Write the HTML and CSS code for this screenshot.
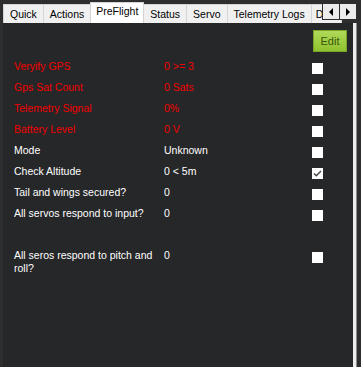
FILE: index.html
```html
<!DOCTYPE html>
<html lang="en">
<head>
  <meta charset="UTF-8">
  <title>PreFlight</title>
  <link rel="stylesheet" href="styles.css">
</head>
<body>
  <!-- Tab strip -->
  <div class="tabs">
    <div class="tab">Quick</div>
    <div class="tab">Actions</div>
    <div class="tab active">PreFlight</div>
    <div class="tab tab-status">Status</div>
    <div class="tab">Servo</div>
    <div class="tab">Telemetry Logs</div>
    <div class="tab tab-last">D</div>
  </div>

  <!-- Scroll arrows sit over the clipped tabs -->
  <div class="tab-arrows">
    <div class="arrow"><span class="tri tri-left"></span></div>
    <div class="arrow"><span class="tri tri-right"></span></div>
  </div>

  <div class="panel">
    <div class="toolbar">
      <button class="edit-btn">Edit</button>
    </div>

    <div class="checklist">
      <div class="row warn">
        <div class="label">Veryify GPS</div>
        <div class="value">0 &gt;= 3</div>
        <div class="check"></div>
      </div>
      <div class="row warn">
        <div class="label">Gps Sat Count</div>
        <div class="value">0 Sats</div>
        <div class="check"></div>
      </div>
      <div class="row warn">
        <div class="label">Telemetry Signal</div>
        <div class="value">0%</div>
        <div class="check"></div>
      </div>
      <div class="row warn">
        <div class="label">Battery Level</div>
        <div class="value">0 V</div>
        <div class="check"></div>
      </div>
      <div class="row">
        <div class="label">Mode</div>
        <div class="value">Unknown</div>
        <div class="check"></div>
      </div>
      <div class="row">
        <div class="label">Check Altitude</div>
        <div class="value">0 &lt; 5m</div>
        <div class="check checked">
          <svg width="11" height="11" viewBox="0 0 11 11"><path d="M2 5.5 L4.3 7.8 L9 3" fill="none" stroke="#444" stroke-width="1.4"/></svg>
        </div>
      </div>
      <div class="row">
        <div class="label">Tail and wings secured?</div>
        <div class="value">0</div>
        <div class="check"></div>
      </div>
      <div class="row">
        <div class="label">All servos respond to input?</div>
        <div class="value">0</div>
        <div class="check"></div>
      </div>
      <div class="row spacer"></div>
      <div class="row">
        <div class="label">All seros respond to pitch and roll?</div>
        <div class="value">0</div>
        <div class="check"></div>
      </div>
    </div>
  </div>
</body>
</html>
```

FILE: styles.css
```css
/* Page */
body {
  margin: 0;
  width: 361px;
  height: 367px;
  overflow: hidden;
  position: relative;
  background-color: #2e2e2e;
  font-family: "Liberation Sans", Arial, sans-serif;
  font-size: 10.5px;
  color: white;
}

/* Tab strip */
.tabs {
  display: flex;
  align-items: flex-end;
  height: 23px;
  padding-left: 3px;
  white-space: nowrap;
  overflow: hidden;
}

.tab {
  box-sizing: border-box;
  flex-shrink: 0;
  height: 19px;
  padding: 0 6px;
  line-height: 19px;
  background-color: #f0f0f0;
  border: 1px solid #d4d4d4;
  border-bottom: none;
  border-left: none;
  color: black;
}

.tab:first-child {
  border-left: 1px solid #d4d4d4;
}

.tab-status {
  padding: 0 6px;
}

.tab-last {
  width: 30px;
  padding: 0 4px;
}

.tab.active {
  height: 21px;
  line-height: 17px;
  padding: 0 5px;
  background-color: white;
  border-left: 1px solid #d4d4d4;
  margin-left: -1px;
}

/* Tab scroll arrows */
.tab-arrows {
  position: absolute;
  top: 3px;
  right: 4px;
  display: flex;
  background-color: #2e2e2e;
  padding: 1px 0 1px 1px;
}

.arrow {
  width: 16px;
  height: 15px;
  margin-right: 1px;
  background-color: #ececec;
  display: flex;
  justify-content: center;
  align-items: center;
}

.tri {
  width: 0;
  height: 0;
  border-top: 4px solid transparent;
  border-bottom: 4px solid transparent;
}

.tri-left {
  border-right: 4px solid black;
}

.tri-right {
  border-left: 4px solid black;
}

/* Main panel */
.panel {
  margin-left: 3px;
  width: 350px;
  height: 344px;
  background-color: #262729;
  border-right: 3px solid #ececec;
  box-shadow: 1px 0 0 #8c8c8c;
}

.toolbar {
  display: flex;
  justify-content: flex-end;
  padding: 7px 6px 0 0;
  margin-bottom: 4px;
}

.edit-btn {
  width: 34px;
  height: 22px;
  padding: 0;
  border: 1px solid #7aa428;
  background: linear-gradient(#b0d95a, #8fc22e);
  color: #3a560a;
  font-family: "Liberation Sans", Arial, sans-serif;
  font-size: 11px;
}

/* Checklist rows */
.checklist {
  padding-left: 11px;
}

.row {
  display: grid;
  grid-template-columns: 150px 148px 11px;
  align-items: start;
  min-height: 21px;
  box-sizing: border-box;
  padding-top: 4px;
  line-height: 13px;
}

.row.warn {
  color: #f20000;
}

.label {
  padding-right: 4px;
}

.check {
  width: 11px;
  height: 11px;
  margin-top: 3px;
  background-color: white;
}

.check svg {
  display: block;
}
```
